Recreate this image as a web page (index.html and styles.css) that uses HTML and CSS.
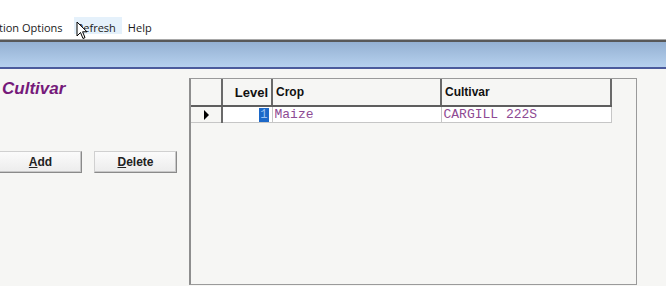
FILE: index.html
```html
<!DOCTYPE html>
<html lang="en">
<head>
  <meta charset="UTF-8">
  <title>Cultivar</title>
  <link rel="stylesheet" href="styles.css">
</head>
<body>
  <div class="window">
    <nav class="menubar">
      <span class="menu first">tion Options</span>
      <span class="menu hover">Refresh
        <svg class="cursor" width="12" height="19" viewBox="0 0 12 19">
          <path d="M1 1 L1 15 L4.5 11.5 L7 17.5 L9 16.6 L6.6 10.8 L11 10.8 Z" fill="#fff" stroke="#000" stroke-width="1"/>
        </svg>
      </span>
      <span class="menu">Help</span>
    </nav>
    <div class="rule"></div>
    <div class="banner"></div>
    <main class="body">
      <section class="side">
        <h1 class="title">Cultivar</h1>
        <div class="buttons">
          <button class="btn"><u>A</u>dd</button>
          <button class="btn"><u>D</u>elete</button>
        </div>
      </section>
      <section class="grid">
        <table class="sheet">
          <thead>
            <tr>
              <th class="rowhead"></th>
              <th class="num">Level</th>
              <th>Crop</th>
              <th>Cultivar</th>
            </tr>
          </thead>
          <tbody>
            <tr>
              <td class="rowhead"><span class="arrow"></span></td>
              <td class="num"><span class="sel">1</span></td>
              <td class="mono">Maize</td>
              <td class="mono">CARGILL 222S</td>
            </tr>
          </tbody>
        </table>
      </section>
    </main>
  </div>
</body>
</html>
```

FILE: styles.css
```css
body { margin: 0; font-family: "Open Sans", "Noto Sans", sans-serif; background: #f6f6f4; }
.window { width: 666px; height: 286px; overflow: hidden; display: flex; flex-direction: column; }

.menubar {
  height: 39px;
  background: #fff;
  display: flex;
  align-items: flex-end;
  padding-bottom: 5px;
  box-sizing: border-box;
  font-size: 11px;
  color: #1a1a1a;
}
.menu { padding: 3px 6px 1px; position: relative; height: 17px; line-height: 15px; box-sizing: border-box; }
.menu.first { padding-left: 0; margin-left: -1px; margin-right: 5px; }
.menu.hover { background: #e5f1fb; padding: 3px 6px 1px 3px; margin-right: 0; }
.cursor { position: absolute; left: 2px; top: 4px; }

.rule { height: 2px; background: #585858; border-top: 1px solid #a8a8a8; }
.banner {
  height: 25px;
  background: linear-gradient(#94b0d2, #b6d1ee);
  border-bottom: 2px solid #4b5b9c;
}

.body { flex: 1; display: flex; }
.side { width: 189px; flex-shrink: 0; }
.title {
  margin: 10px 0 0 2px;
  font-family: "Liberation Sans", Arial, sans-serif;
  font-size: 17px;
  font-weight: bold;
  font-style: italic;
  color: #751a7a;
}
.buttons { display: flex; gap: 12px; margin-top: 52px; margin-left: -1px; }
.btn {
  width: 83px;
  height: 22px;
  font-family: "Liberation Sans", Arial, sans-serif;
  font-size: 12px;
  font-weight: bold;
  color: #222;
  background: linear-gradient(#fbfbfb, #ececec);
  border: 1px solid #d0d0d0;
  border-right-color: #8a8a8a;
  border-bottom-color: #8a8a8a;
  box-shadow: inset -1px -1px 0 #c8c8c8;
  padding: 0;
}

.grid {
  margin-top: 9px;
  width: 448px;
  height: 207px;
  border: 1px solid #9a9a9a;
  border-left: 2px solid #8e8e8e;
  box-sizing: border-box;
  background: #f6f6f4;
}
.sheet { border-collapse: collapse; font-family: "Liberation Sans", Arial, sans-serif; font-size: 12px; }
.sheet th {
  height: 27px;
  padding: 0 3px;
  text-align: left;
  font-weight: bold;
  color: #111;
  background: #f6f6f4;
  border-right: 2px solid #6a6a6a;
  border-bottom: 2px solid #5e5e5e;
  box-sizing: border-box;
}
.sheet th:nth-child(1), .sheet td:nth-child(1) { width: 31px; }
.sheet th:nth-child(2), .sheet td:nth-child(2) { width: 50px; }
.sheet th:nth-child(3), .sheet td:nth-child(3) { width: 169px; }
.sheet th:nth-child(4), .sheet td:nth-child(4) { width: 170px; }
.sheet th.num { text-align: right; font-size: 13px; }
.sheet td {
  height: 15px;
  padding: 0 2px;
  background: #fff;
  border-right: 1px solid #c6c6c6;
  border-bottom: 1px solid #c6c6c6;
  box-sizing: border-box;
}
.sheet td.rowhead { background: #f6f6f4; border-right: 2px solid #6a6a6a; text-align: center; }
.sheet td.num { text-align: right; padding-right: 3px; }
.arrow {
  display: inline-block;
  border-left: 5px solid #000;
  border-top: 5px solid transparent;
  border-bottom: 5px solid transparent;
  vertical-align: middle;
}
.sel { background: #1c68c8; color: #9cc2f0; font-family: "Liberation Mono", monospace; padding: 0 1px; }
.mono { font-family: "Liberation Mono", "Courier New", monospace; color: #8e4a93; font-size: 13px; line-height: 14px; }
```
